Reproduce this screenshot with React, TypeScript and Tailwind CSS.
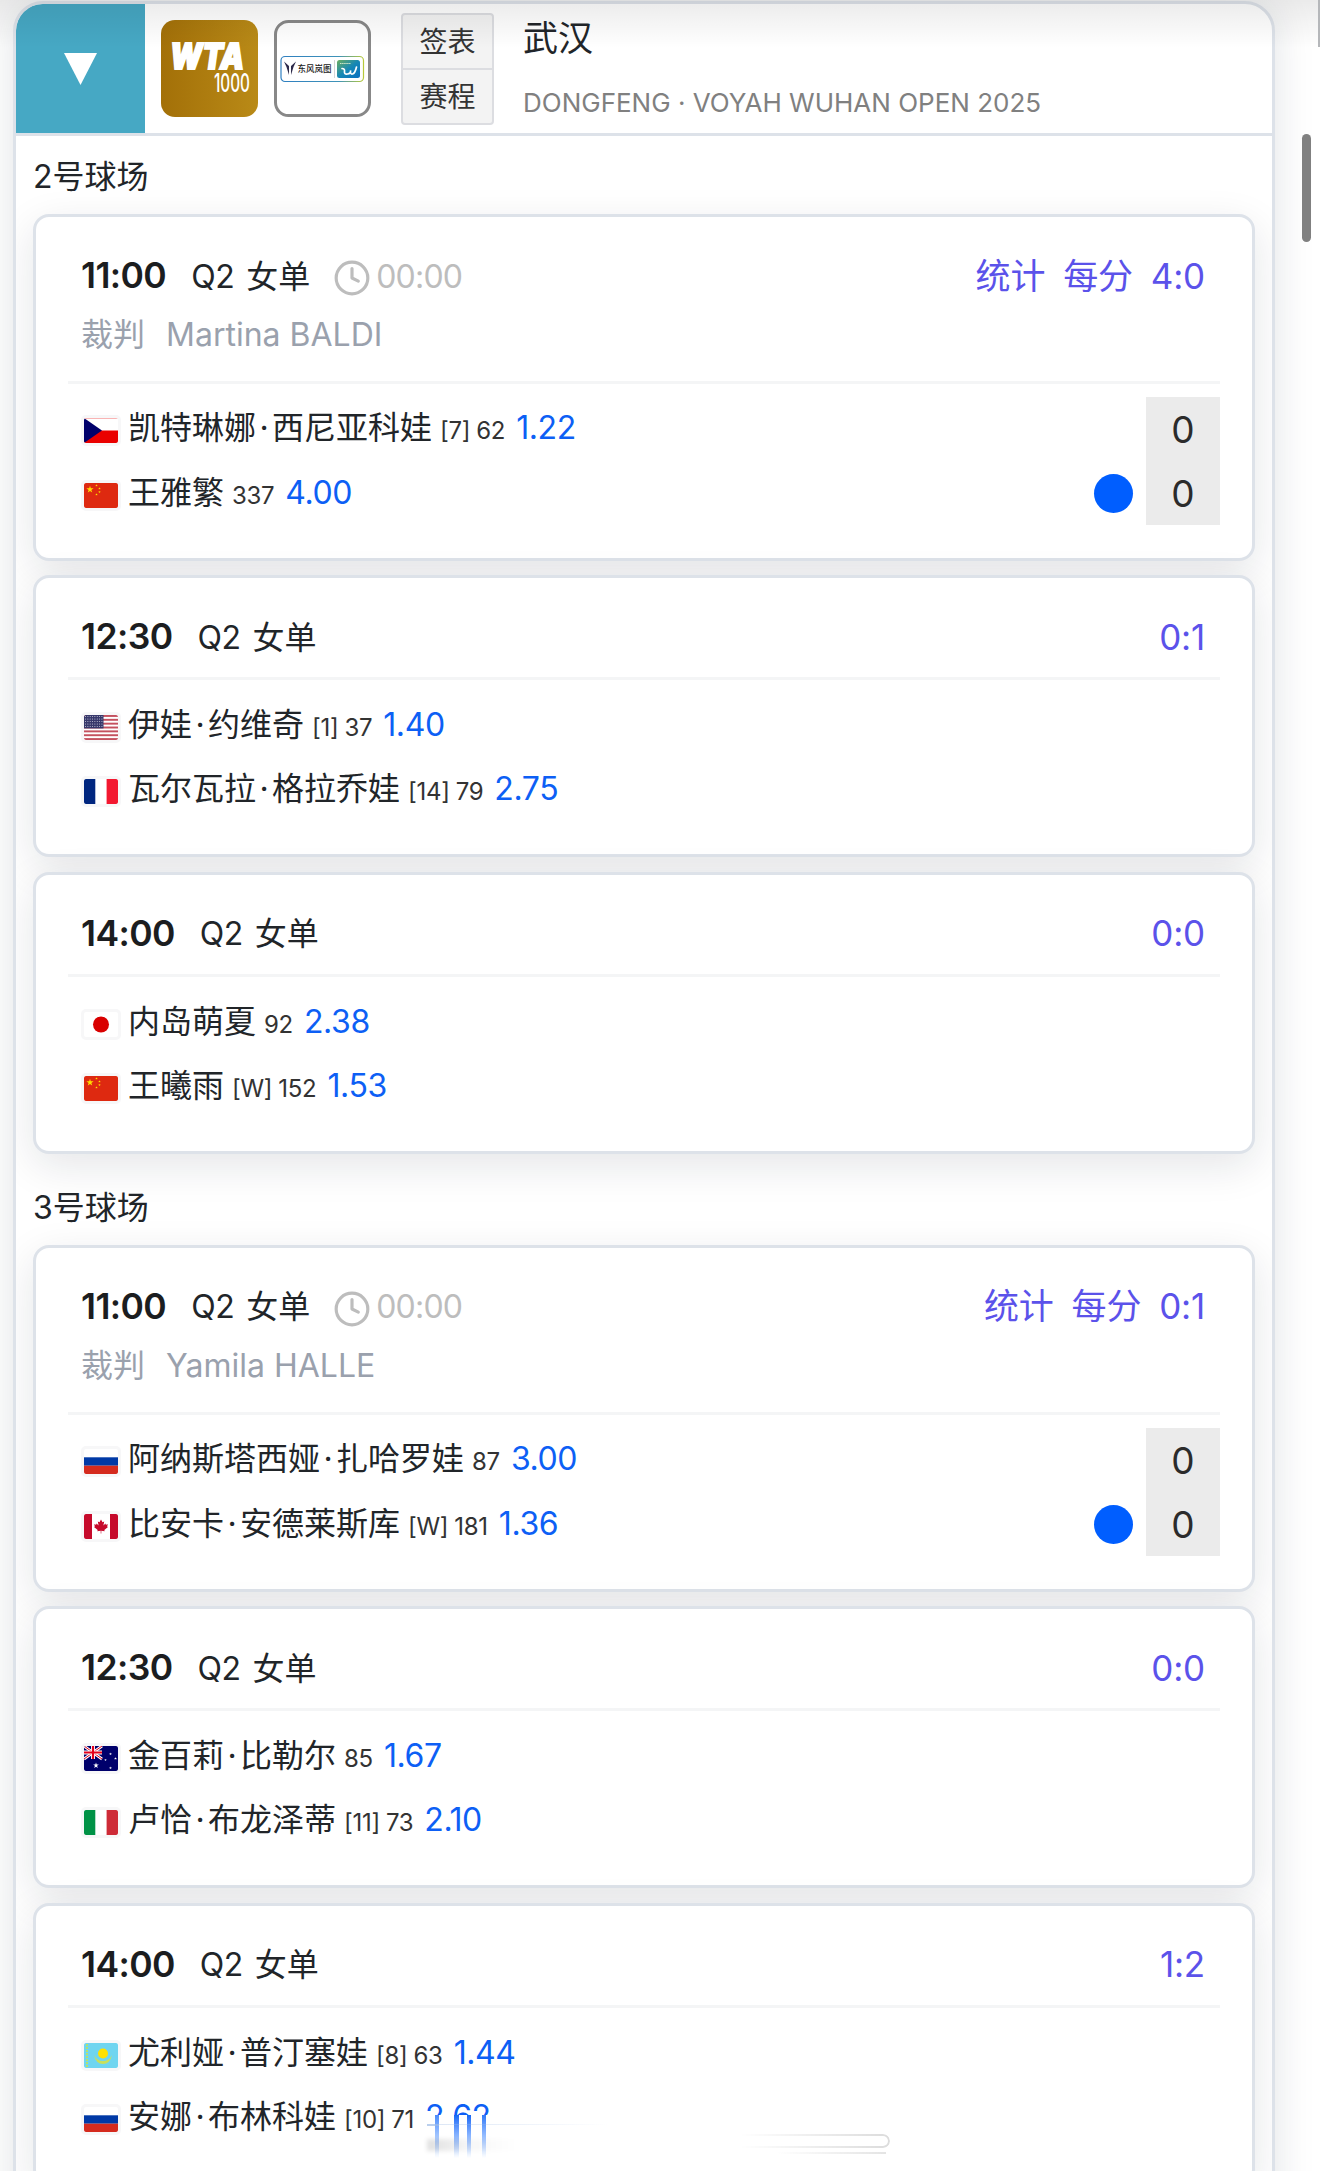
import React from 'react';
import { Clock } from 'lucide-react';

type Country = 'CZE' | 'CHN' | 'USA' | 'FRA' | 'JPN' | 'RUS' | 'CAN' | 'AUS' | 'ITA' | 'KAZ';

interface Player {
  country: Country;
  name: string;
  seed?: string;
  rank: number;
  odds: string;
  serving?: boolean;
}

interface Match {
  time: string;
  h2h: string;
  umpire?: string;
  players: Player[];
}

const COURTS: { name: string; matches: Match[] }[] = [
  {
    name: '2号球场',
    matches: [
      {
        time: '11:00',
        h2h: '4:0',
        umpire: 'Martina BALDI',
        players: [
          { country: 'CZE', name: '凯特琳娜·西尼亚科娃', seed: '7', rank: 62, odds: '1.22' },
          { country: 'CHN', name: '王雅繁', rank: 337, odds: '4.00', serving: true },
        ],
      },
      {
        time: '12:30',
        h2h: '0:1',
        players: [
          { country: 'USA', name: '伊娃·约维奇', seed: '1', rank: 37, odds: '1.40' },
          { country: 'FRA', name: '瓦尔瓦拉·格拉乔娃', seed: '14', rank: 79, odds: '2.75' },
        ],
      },
      {
        time: '14:00',
        h2h: '0:0',
        players: [
          { country: 'JPN', name: '内岛萌夏', rank: 92, odds: '2.38' },
          { country: 'CHN', name: '王曦雨', seed: 'W', rank: 152, odds: '1.53' },
        ],
      },
    ],
  },
  {
    name: '3号球场',
    matches: [
      {
        time: '11:00',
        h2h: '0:1',
        umpire: 'Yamila HALLE',
        players: [
          { country: 'RUS', name: '阿纳斯塔西娅·扎哈罗娃', rank: 87, odds: '3.00' },
          { country: 'CAN', name: '比安卡·安德莱斯库', seed: 'W', rank: 181, odds: '1.36', serving: true },
        ],
      },
      {
        time: '12:30',
        h2h: '0:0',
        players: [
          { country: 'AUS', name: '金百莉·比勒尔', rank: 85, odds: '1.67' },
          { country: 'ITA', name: '卢恰·布龙泽蒂', seed: '11', rank: 73, odds: '2.10' },
        ],
      },
      {
        time: '14:00',
        h2h: '1:2',
        players: [
          { country: 'KAZ', name: '尤利娅·普汀塞娃', seed: '8', rank: 63, odds: '1.44' },
          { country: 'RUS', name: '安娜·布林科娃', seed: '10', rank: 71, odds: '2.62' },
        ],
      },
    ],
  },
];

const STAR = '0,-1 .22,-.31 .95,-.31 .36,.12 .59,.81 0,.38 -.59,.81 -.36,.12 -.95,-.31 -.22,-.31';

function Star({ x, y, r, fill }: { x: number; y: number; r: number; fill: string }) {
  return <polygon points={STAR} fill={fill} transform={`translate(${x} ${y}) scale(${r})`} />;
}

function FlagArt({ country }: { country: Country }) {
  switch (country) {
    case 'CZE':
      return (
        <>
          <rect y="12.5" width="34" height="12.5" fill="#ea0000" />
          <path d="M0 0L18 12.5L0 25z" fill="#00006b" />
          <path d="M0 .5H34" stroke="#f9b4b4" strokeWidth="1" />
        </>
      );
    case 'CHN':
      return (
        <>
          <rect width="34" height="25" fill="#de2910" />
          <Star x={6} y={6.5} r={3.8} fill="#ffde00" />
          <Star x={12.5} y={2.5} r={1.3} fill="#ffde00" />
          <Star x={15.5} y={5.5} r={1.3} fill="#ffde00" />
          <Star x={15.5} y={9} r={1.3} fill="#ffde00" />
          <Star x={12.5} y={11.5} r={1.3} fill="#ffde00" />
        </>
      );
    case 'USA':
      return (
        <>
          {[0, 1, 2, 3, 4, 5, 6].map((i) => (
            <rect key={i} y={i * 3.85} width="34" height="1.92" fill="#c4515f" />
          ))}
          <rect width="19.5" height="13.4" fill="#37386b" />
          {Array.from({ length: 40 }, (_, i) => (
            <circle key={i} cx={1.5 + (i % 8) * 2.35} cy={1.6 + Math.floor(i / 8) * 2.5} r=".5" fill="#d5d5e2" />
          ))}
        </>
      );
    case 'FRA':
      return (
        <>
          <rect width="11.3" height="25" fill="#00267f" />
          <rect x="22.6" width="11.4" height="25" fill="#f31830" />
        </>
      );
    case 'JPN':
      return <circle cx="17" cy="12.5" r="8" fill="#d90000" />;
    case 'RUS':
      return (
        <>
          <rect y="8.3" width="34" height="8.4" fill="#0039a6" />
          <rect y="16.7" width="34" height="8.3" fill="#d52b1e" />
        </>
      );
    case 'CAN':
      return (
        <>
          <rect width="8" height="25" fill="#c60a2b" />
          <rect x="26" width="8" height="25" fill="#c60a2b" />
          <path
            d="M17 5.5l1.5 2.8 1.7-.8-.8 4 2-2 .5 1.2 2-.4-.8 2.2.9.5-3.7 3 .4 1.3-3.4-.5v2.700h-.6v-2.700l-3.400.5.4-1.300-3.700-3 .9-.5-.8-2.200 2 .4.5-1.200 2 2-.8-4 1.700.8z"
            fill="#c60a2b"
          />
        </>
      );
    case 'AUS':
      return (
        <>
          <rect width="34" height="25" fill="#00006b" />
          <path d="M0 0L18 13M18 0L0 13" stroke="#fff" strokeWidth="2.8" />
          <path d="M0 0L18 13M18 0L0 13" stroke="#e2001a" strokeWidth="1" />
          <path d="M9 0V13M0 6.5H18" stroke="#fff" strokeWidth="4" />
          <path d="M9 0V13M0 6.5H18" stroke="#e2001a" strokeWidth="2.2" />
          <Star x={12} y={19.5} r={3} fill="#fff" />
          <Star x={26.5} y={8} r={1.5} fill="#fff" />
          <Star x={31.5} y={12.5} r={1.5} fill="#fff" />
          <Star x={21.5} y={14} r={1.3} fill="#fff" />
          <Star x={26.5} y={22} r={1.5} fill="#fff" />
        </>
      );
    case 'ITA':
      return (
        <>
          <rect width="11.3" height="25" fill="#009246" />
          <rect x="22.6" width="11.4" height="25" fill="#ce2b37" />
        </>
      );
    case 'KAZ':
      return (
        <>
          <rect width="34" height="25" fill="#6fd5f0" />
          <path d="M3 1V24" stroke="#b5e36b" strokeWidth="2" strokeDasharray="2 1" />
          <circle cx="19" cy="10.5" r="5" fill="#ffe100" />
          <path d="M10 12q2 9 9 9t9-9q-3 6-9 6t-9-6z" fill="#c9e05a" />
        </>
      );
  }
}

function Flag({ country }: { country: Country }) {
  return (
    <div className="mt-[4px] shrink-0 overflow-hidden rounded-[5px] border-[3px] border-[#f7f7f8] bg-white">
      <svg width="34" height="25" viewBox="0 0 34 25" className="block rounded-[1px]">
        <FlagArt country={country} />
      </svg>
    </div>
  );
}

function WtaLogo() {
  return (
    <svg width="97" height="97" viewBox="0 0 97 97" className="shrink-0 overflow-visible">
      <defs>
        <linearGradient id="gold" x1="0" y1="0" x2="1" y2="0">
          <stop offset="0" stopColor="#a37008" />
          <stop offset="1" stopColor="#b98a17" />
        </linearGradient>
      </defs>
      <rect width="97" height="97" rx="14" fill="url(#gold)" />
      <text
        x="9"
        y="49"
        fill="#fff"
        stroke="#fff"
        strokeWidth="2"
        fontSize="36"
        fontWeight="900"
        fontStyle="italic"
        fontFamily="Inter"
        textLength="74"
        lengthAdjust="spacingAndGlyphs"
      >
        WTA
      </text>
      <text x="53" y="72" fill="#fff" fontSize="25" fontWeight="500" fontFamily="Inter" textLength="36" lengthAdjust="spacingAndGlyphs">
        1000
      </text>
    </svg>
  );
}

function SponsorLogo() {
  return (
    <svg width="97" height="97" viewBox="0 0 97 97" className="ml-4 shrink-0">
      <defs>
        <linearGradient id="frame" x1="0" y1="0" x2="1" y2="0">
          <stop offset="0" stopColor="#2f7fc0" />
          <stop offset=".7" stopColor="#3f93b8" />
          <stop offset="1" stopColor="#b7c93a" />
        </linearGradient>
        <linearGradient id="tile" x1="0" y1="0" x2="1" y2="1">
          <stop offset="0" stopColor="#6dae5f" />
          <stop offset=".5" stopColor="#1687b5" />
          <stop offset="1" stopColor="#0a6fc0" />
        </linearGradient>
      </defs>
      <rect x="1.5" y="1.5" width="94" height="94" rx="13" fill="#fff" stroke="#888" strokeWidth="3" />
      <rect x="7" y="36.5" width="82.5" height="25" rx="4" fill="#fff" stroke="url(#frame)" strokeWidth="1.2" />
      <path d="M10 41.5l5 4.500v9l-2.500-8zM22 41.5l-5 4.500v9l2.500-8z" fill="#2d2a4a" />
      <text x="23.5" y="52" fontSize="8.6" fontFamily="Noto Sans CJK SC" fontWeight="500" fill="#222" textLength="34" lengthAdjust="spacingAndGlyphs">
        东风岚图
      </text>
      <path d="M60.5 40V58" stroke="#bbb" strokeWidth=".6" />
      <rect x="63" y="40" width="23" height="18" rx="2.5" fill="url(#tile)" />
      <path d="M66 43.5h11" stroke="#cfe6c8" strokeWidth="1" strokeDasharray="1.5 .6" />
      <path d="M68 48.500q3 0 2.500 3t3 2.500 3-3.500q-.5 4 2 3.500t4-7" fill="none" stroke="#fff" strokeWidth="1.7" strokeLinecap="round" />
    </svg>
  );
}

function PlayerName({ name }: { name: string }) {
  return (
    <span className="flex text-[32px] text-[#212529]">
      {name.split('·').map((part, i) => (
        <React.Fragment key={part}>
          {i > 0 && <span className="w-4 text-center">·</span>}
          <span>{part}</span>
        </React.Fragment>
      ))}
    </span>
  );
}

function PlayerRow({ player, live }: { player: Player; live: boolean }) {
  return (
    <div className="flex h-[64.3px] items-center pl-[13px]">
      <Flag country={player.country} />
      <div className="ml-[7px] flex items-baseline whitespace-nowrap pt-[2px] leading-[64px]">
        <PlayerName name={player.name} />
        <span className="ml-2 flex gap-[6px] text-[24px] tracking-[-0.3px] text-[#333]">
          {player.seed && <span>[{player.seed}]</span>}
          <span>{player.rank}</span>
        </span>
        <span className="ml-[11px] text-[32px] tracking-[-0.4px] text-[#0d5ff5]">{player.odds}</span>
      </div>
      {live && (
        <div className="ml-auto flex h-[64.3px] items-center">
          {player.serving && <div className="mr-[13px] mt-px size-[39px] rounded-full bg-[#005eff]" />}
          <div className="h-full w-[74px] bg-[#ebebeb] text-center text-[37px] leading-[65px] text-[#2b2b2b]">0</div>
        </div>
      )}
    </div>
  );
}

function MatchCard({ match }: { match: Match }) {
  const live = Boolean(match.umpire);
  return (
    <div className="rounded-[16px] border-[3px] border-[#dde2e9] bg-white px-8 pb-[32.4px] shadow-[0_12px_42px_rgba(20,30,50,0.11)]">
      <div className="border-b-[3px] border-[#f4f5f6] pl-[13px] pr-[15px] pt-[36px] pb-[17.3px]">
        <div className="flex h-[46px] items-center whitespace-nowrap leading-[46px]">
          <span className="text-[35.5px] font-semibold tracking-[-0.6px] text-[#1b1d20]">{match.time}</span>
          <span className="ml-[25px] pt-px text-[32px] tracking-[-0.5px] text-[#212529]">Q2</span>
          <span className="ml-[12px] pt-px text-[32px] text-[#212529]">女单</span>
          {live && (
            <span className="ml-[23px] flex items-center text-[32px] text-[#bdbdbd]">
              <Clock size={38} strokeWidth={2} className="mt-[4px] -mr-[3px] shrink-0" />
              <span className="ml-2 pt-px tracking-[-0.8px]">00:00</span>
            </span>
          )}
          <span className="ml-auto flex gap-[18px] pb-px text-[35px] tracking-[-0.2px] text-[#5b52ea]">
            {live && <span>统计</span>}
            {live && <span>每分</span>}
            <span>{match.h2h}</span>
          </span>
        </div>
        {match.umpire && (
          <div className="flex h-[64.5px] items-center gap-[21px] whitespace-nowrap pt-[7px] text-[32px] leading-none text-[#9aa1ad]">
            <span>裁判</span>
            <span>{match.umpire}</span>
          </div>
        )}
      </div>
      <div className="pt-[13px]">
        {match.players.map((player) => (
          <PlayerRow key={player.name} player={player} live={live} />
        ))}
      </div>
    </div>
  );
}

function TournamentHeader() {
  return (
    <div className="flex h-[132px] border-b-[3px] border-[#dde2e9]">
      <button className="flex w-[129px] shrink-0 items-center justify-center rounded-tl-[26px] bg-[#46a8c4]">
        <svg width="33" height="32" viewBox="0 0 33 32">
          <path d="M0 0H33L16.5 32z" fill="#fff" />
        </svg>
      </button>
      <div className="ml-4 mt-4 flex">
        <WtaLogo />
        <SponsorLogo />
      </div>
      <div className="ml-[30px] mt-[9px] flex h-[112px] w-[93px] flex-col rounded-[4px] border-2 border-[#dcdde1] bg-[#f3f3f3] text-[28px] text-[#333]">
        <button className="h-[55px] border-b-2 border-[#dcdde1] leading-[55px]">签表</button>
        <button className="h-[53px] leading-[54px]">赛程</button>
      </div>
      <div className="ml-[29px] whitespace-nowrap">
        <div className="h-[66px] text-[35px] leading-[68px] text-[#212529]">武汉</div>
        <div className="h-[62px] text-[26px] leading-[65px] text-[#808080]">DONGFENG · VOYAH WUHAN OPEN 2025</div>
      </div>
    </div>
  );
}

function HomeIndicator() {
  return (
    <div className="absolute left-[426px] top-[2115px] h-[46px] w-[466px] bg-white">
      <div className="absolute left-[9px] top-0 h-[43px] w-[4px] bg-linear-to-b from-[#4a8bfa] to-white blur-[0.7px]" />
      <div className="absolute left-[28px] top-0 h-[43px] w-[5px] bg-linear-to-b from-[#1266f5] to-white blur-[0.7px]" />
      <div className="absolute left-[41px] top-0 h-[43px] w-[4px] bg-linear-to-b from-[#1266f5] to-white blur-[0.7px]" />
      <div className="absolute left-[56px] top-0 h-[43px] w-[4px] bg-linear-to-b from-[#2f78f7] to-white blur-[0.7px]" />
      <div className="absolute left-[1px] top-[9px] h-[2px] w-[12px] bg-[#9dbbe6]/70" />
      <div className="absolute left-[13px] top-[9px] h-px w-[170px] bg-linear-to-r from-[#9dbbe6]/35 to-transparent" />
      <div className="absolute left-[1px] top-[24px] h-[12px] w-[90px] bg-linear-to-r from-black/12 via-black/3 to-transparent blur-[2px]" />
      <div className="absolute right-[2px] top-[19px] h-[14px] w-[150px] rounded-r-[7px] border-y-2 border-r-2 border-[#dcdcdc] mask-l-from-0% blur-[0.7px]" />
      <div className="absolute right-[6px] top-[37px] h-[2px] w-[110px] bg-linear-to-l from-[#e4e4e4] to-transparent blur-[0.7px]" />
    </div>
  );
}

export default function App() {
  return (
    <div className="relative h-[2171px] w-[1320px] overflow-hidden bg-white pl-[13px] pt-px font-['Inter','Noto_Sans_CJK_SC',sans-serif]">
      <div className="h-[2300px] w-[1262px] overflow-hidden rounded-t-[30px] border-[3px] border-[#dde2e9] bg-white shadow-[0_0_42px_rgba(20,30,50,0.12)]">
        <TournamentHeader />
        <div className="px-[17px]">
          {COURTS.map((court) => (
            <section key={court.name} className="mb-[13px]">
              <h2 className="h-[78px] text-[32px] leading-[81px] text-[#212529]">{court.name}</h2>
              <div className="flex flex-col gap-[14.3px]">
                {court.matches.map((match) => (
                  <MatchCard key={match.time} match={match} />
                ))}
              </div>
            </section>
          ))}
        </div>
      </div>

      <HomeIndicator />

      {/* Shade under the browser toolbar */}
      <div className="absolute inset-x-0 top-0 h-[48px] bg-linear-to-b from-black/8 to-transparent" />
      <div className="absolute right-0 top-0 h-[47px] w-[2px] bg-[#b5b7ba]" />
      <div className="absolute left-[1302px] top-[134px] h-[108px] w-[9px] rounded-full bg-[#808080]" />
    </div>
  );
}
